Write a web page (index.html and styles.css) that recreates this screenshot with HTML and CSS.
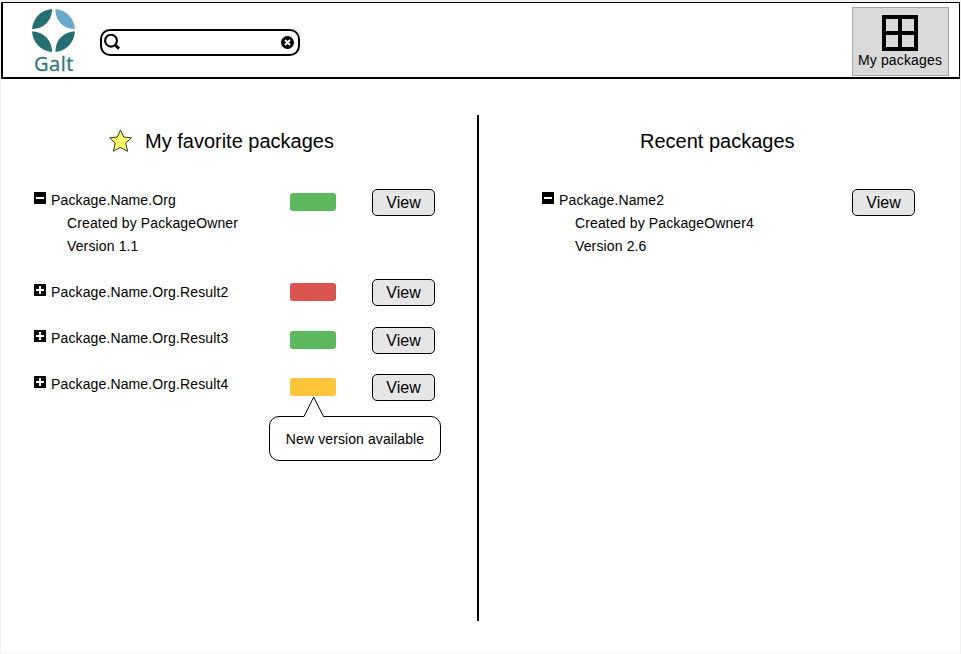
FILE: index.html
```
<!DOCTYPE html>
<html lang="en">
<head>
<meta charset="utf-8">
<title>Galt - My packages</title>
<link rel="stylesheet" href="styles.css">
</head>
<body>
<div class="page">
  <header class="header">
    <div class="brand">
      <svg class="brand-mark" width="44" height="44" viewBox="0 0 44 44">
        <g fill="#256f73">
          <path d="M20 0V2C19 12 12 19 2 20H0C1 9 9 1 20 0Z"/>
          <path d="M0 22.500H2C12 23.500 19 31 20 41V43C9 42 1 34 0 22.500Z"/>
          <path d="M43 22.500H41C31 23.500 24 31 23.500 41V43C34 42 42 34 43 22.500Z"/>
        </g>
        <path fill="#66a9cb" d="M23.500 0V2C24 12 31 19 41 20H43C42 9 34 1 23.500 0Z"/>
      </svg>
      <span class="brand-name">Galt</span>
    </div>
    <div class="search">
      <svg width="17" height="17" viewBox="0 0 17 17" fill="none" stroke="#000">
        <circle cx="7" cy="6.700" r="5.900" stroke-width="2.100"/>
        <path d="M11 10.800L15 14.600" stroke-width="2.900"/>
      </svg>
      <svg width="13" height="13" viewBox="0 0 13 13">
        <circle cx="6.500" cy="6.500" r="6.500"/>
        <path d="M4 4L9 9M9 4L4 9" stroke="#fff" stroke-width="2"/>
      </svg>
    </div>
    <div class="nav-button">
      <svg width="36" height="36" viewBox="0 0 36 36" fill="none" stroke="#000" stroke-width="4">
        <path d="M2 2H34V34H2ZM18 2V34M2 18H34"/>
      </svg>
      <span>My packages</span>
    </div>
  </header>
  <main class="content">
    <section class="panel favorites">
      <h2 class="title">
        <svg width="24" height="24" viewBox="0 0 24 24">
          <path d="M11.500 .9L14.700 8L22.300 8.800L16.700 14.200L18.600 22.300L11.500 18.400L4.400 22.300L6.300 14.200L.7 8.800L8.300 8Z" fill="#ffff66" stroke="#333"/>
        </svg>
        <span>My favorite packages</span>
      </h2>
      <div class="list">
        <div class="tree">
          <div class="item">
            <svg class="toggle" width="12" height="12"><rect width="12" height="12" rx=".6"/><path d="M2 6H10" stroke="#fff" stroke-width="2"/></svg>
            <div><p>Package.Name.Org</p><p class="detail">Created by PackageOwner</p><p class="detail">Version 1.1</p></div>
          </div>
          <div class="item">
            <svg class="toggle" width="12" height="12"><rect width="12" height="12" rx=".6"/><path d="M2 6H10M6 2V10" stroke="#fff" stroke-width="2"/></svg>
            <p>Package.Name.Org.Result2</p>
          </div>
          <div class="item">
            <svg class="toggle" width="12" height="12"><rect width="12" height="12" rx=".6"/><path d="M2 6H10M6 2V10" stroke="#fff" stroke-width="2"/></svg>
            <p>Package.Name.Org.Result3</p>
          </div>
          <div class="item">
            <svg class="toggle" width="12" height="12"><rect width="12" height="12" rx=".6"/><path d="M2 6H10M6 2V10" stroke="#fff" stroke-width="2"/></svg>
            <p>Package.Name.Org.Result4</p>
          </div>
        </div>
        <div class="actions">
          <div class="action expanded"><span class="status ok"></span><button class="view">View</button></div>
          <div class="action"><span class="status error"></span><button class="view">View</button></div>
          <div class="action compact"><span class="status ok"></span><button class="view">View</button></div>
          <div class="action">
            <span class="status warning"></span><button class="view">View</button>
            <div class="tooltip">
              <svg class="pointer" width="22" height="22" viewBox="0 0 22 22"><path d="M1 20.500L10.700 1L20.500 20.500V22H1Z" fill="#fff"/><path d="M1 20.500L10.700 1L20.500 20.500" fill="none" stroke="#000"/></svg>
              New version available
            </div>
          </div>
        </div>
      </div>
    </section>
    <section class="panel recent">
      <h2 class="title"><span>Recent packages</span></h2>
      <div class="list">
        <div class="tree">
          <div class="item">
            <svg class="toggle" width="12" height="12"><rect width="12" height="12" rx=".6"/><path d="M2 6H10" stroke="#fff" stroke-width="2"/></svg>
            <div><p>Package.Name2</p><p class="detail">Created by PackageOwner4</p><p class="detail">Version 2.6</p></div>
          </div>
        </div>
        <button class="view">View</button>
      </div>
    </section>
  </main>
</div>
</body>
</html>
```
FILE: styles.css
```
* { box-sizing: border-box; }

body {
  margin: 0;
  background: #f2f2f2;
  color: #000;
  font: 14px/23px "Liberation Sans", Arial, sans-serif;
}

p, h2 { margin: 0; font-weight: normal; }
svg { display: block; flex: none; }

.page {
  width: 959px;
  height: 653px;
  margin-left: 1px;
  padding-top: 2px;
  background: linear-gradient(#f2f2f2 2px, #fff 2px);
}

.header {
  display: flex;
  height: 77px;
  border: solid #000;
  border-width: 1px 1px 2px 2px;
  background: #fff;
}

.brand {
  display: flex;
  flex-direction: column;
  align-items: center;
  width: 44px;
  margin: 6px 0 0 29px;
}

.brand-name {
  margin-top: -1px;
  color: #2e777b;
  font: 20px/24px "Open Sans", sans-serif;
  letter-spacing: .5px;
  -webkit-text-stroke: .3px #2e777b;
}

.search {
  display: flex;
  align-items: center;
  justify-content: space-between;
  width: 200px;
  height: 27px;
  margin: 26px 0 0 24px;
  padding: 0 4px 0 2px;
  border: 2px solid #000;
  border-radius: 10px;
}

.nav-button {
  display: flex;
  flex-direction: column;
  align-items: center;
  width: 97px;
  height: 69px;
  margin: 4px 10px 0 auto;
  padding: 7px 1px 0 0;
  border: 1px solid #a8a8a8;
  background: #d9d9d9;
  line-height: 18px;
  letter-spacing: .15px;
}

.content { display: flex; padding-top: 36px; }
.panel { height: 506px; }
.favorites { width: 478px; padding-left: 33px; border-right: 2px solid #000; }
.recent { flex: 1; padding-left: 63px; }

.title {
  display: flex;
  align-items: center;
  gap: 12px;
  height: 52px;
  font-size: 20px;
}
.favorites .title { padding-left: 75px; }
.recent .title { padding-left: 98px; }

.list { display: flex; padding-top: 22px; }
.tree { display: flex; flex-direction: column; gap: 23px; width: 256px; }
.item { display: flex; gap: 5px; letter-spacing: .13px; }
.toggle { margin-top: 3px; }
.detail { padding-left: 16px; }

.action {
  position: relative;
  display: flex;
  gap: 36px;
  height: 27px;
  margin-bottom: 21px;
}
.expanded { margin-bottom: 63px; }
.compact { margin-bottom: 20px; }

.status { width: 46px; height: 18px; margin-top: 4px; border-radius: 3px; }
.ok { background: #5cb85c; }
.error { background: #d9534f; }
.warning { background: #ffc53a; }

.view {
  width: 63px;
  height: 27px;
  padding: 0;
  border: 1px solid #000;
  border-radius: 5px;
  background: #e6e6e6;
  color: #000;
  font: 16px/24px "Liberation Sans", Arial, sans-serif;
}
.recent .view { margin-left: 54px; }

.tooltip {
  position: absolute;
  top: 42px;
  left: -21px;
  width: 172px;
  height: 45px;
  border: 1px solid #000;
  border-radius: 10px;
  background: #fff;
  line-height: 45px;
  text-align: center;
  letter-spacing: .1px;
}
.pointer { position: absolute; top: -21px; left: 33px; }
```
